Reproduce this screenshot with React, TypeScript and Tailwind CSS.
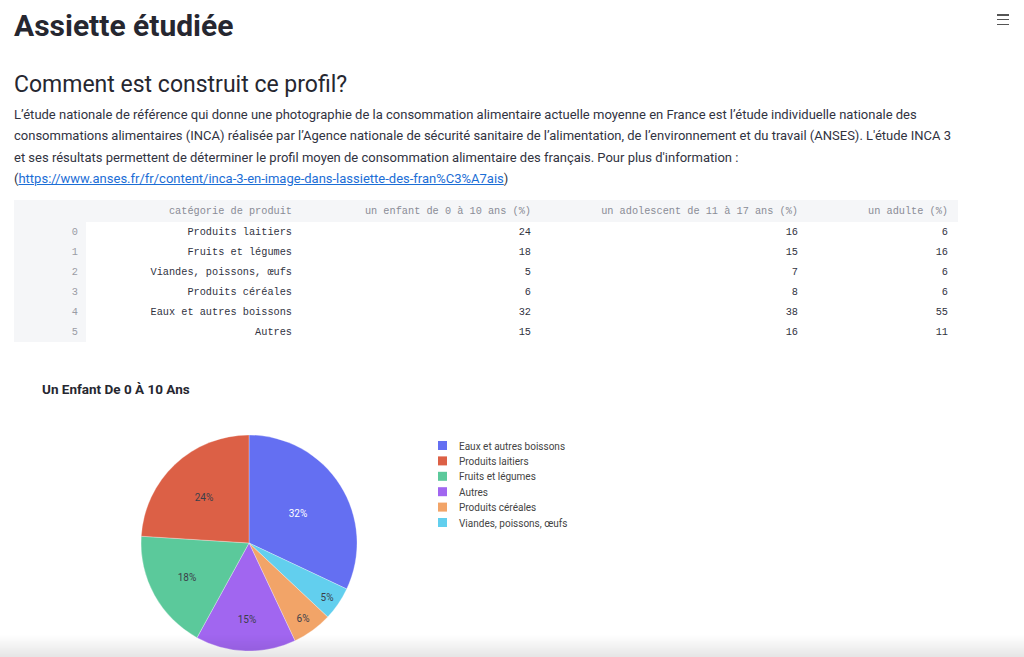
import React from "react";

const rows = [
  { cat: "Produits laitiers", enfant: 24, ado: 16, adulte: 6 },
  { cat: "Fruits et légumes", enfant: 18, ado: 15, adulte: 16 },
  { cat: "Viandes, poissons, œufs", enfant: 5, ado: 7, adulte: 6 },
  { cat: "Produits céréales", enfant: 6, ado: 8, adulte: 6 },
  { cat: "Eaux et autres boissons", enfant: 32, ado: 38, adulte: 55 },
  { cat: "Autres", enfant: 15, ado: 16, adulte: 11 },
];

// slices in plotly order (clockwise from top)
const slices = [
  { label: "Eaux et autres boissons", value: 32, color: "#646ff2", text: "#ffffff", lx: 49, ly: -30 },
  { label: "Viandes, poissons, œufs", value: 5, color: "#62cfee", text: "#3b3f4a", lx: 78, ly: 54 },
  { label: "Produits céréales", value: 6, color: "#f2a468", text: "#3b3f4a", lx: 54, ly: 75 },
  { label: "Autres", value: 15, color: "#a166f0", text: "#3b3f4a", lx: -2, ly: 76 },
  { label: "Fruits et légumes", value: 18, color: "#5bc99b", text: "#3b3f4a", lx: -62, ly: 34 },
  { label: "Produits laitiers", value: 24, color: "#dc6046", text: "#3b3f4a", lx: -45, ly: -46 },
];

const legendOrder = [0, 5, 4, 3, 2, 1];

const R = 108;

function slicePath(cx: number, cy: number, a0: number, a1: number) {
  const p = (a: number) => {
    const rad = (a * Math.PI) / 180;
    return [cx + R * Math.sin(rad), cy - R * Math.cos(rad)];
  };
  const [x0, y0] = p(a0);
  const [x1, y1] = p(a1);
  const large = a1 - a0 > 180 ? 1 : 0;
  return `M ${cx} ${cy} L ${x0} ${y0} A ${R} ${R} 0 ${large} 1 ${x1} ${y1} Z`;
}

function PieChart() {
  const cx = 235;
  const cy = 173;
  let acc = 0;
  return (
    <svg width="944" height="290" className="block">
      <text
        x="28"
        y="24"
        fontSize="13.5"
        fontWeight="700"
        fill="#262730"
        fontFamily="Roboto, 'Liberation Sans', sans-serif"
      >
        Un Enfant De 0 À 10 Ans
      </text>
      {slices.map((s) => {
        const a0 = acc * 3.6;
        acc += s.value;
        const a1 = acc * 3.6;
        return <path key={s.label} d={slicePath(cx, cy, a0, a1)} fill={s.color} stroke="#ffffff" strokeWidth="0.3" />;
      })}
      {slices.map((s) => (
        <text
          key={s.label + "t"}
          x={cx + s.lx}
          y={cy + s.ly + 3.5}
          textAnchor="middle"
          fontSize="10"
          fill={s.text}
          fontFamily="Roboto, 'Liberation Sans', sans-serif"
        >
          {s.value}%
        </text>
      ))}
      {legendOrder.map((i, k) => {
        const s = slices[i];
        const y = 76 + k * 15.4;
        return (
          <g key={s.label + "l"}>
            <rect x="424" y={y - 5} width="9" height="9" fill={s.color} />
            <text
              x="445"
              y={y + 3.5}
              fontSize="10"
              fill="#444444"
              fontFamily="Roboto, 'Liberation Sans', sans-serif"
            >
              {s.label}
            </text>
          </g>
        );
      })}
    </svg>
  );
}

export default function App() {
  return (
    <div className="relative min-h-[657px] bg-white text-[#31333f] font-['Roboto','Liberation_Sans',sans-serif]">
      {/* menu */}
      <button className="absolute right-[15px] top-[14px] flex flex-col gap-[3.4px]">
        <span className="block h-[1.5px] w-[12px] bg-[#555]" />
        <span className="block h-[1.5px] w-[12px] bg-[#555]" />
        <span className="block h-[1.5px] w-[12px] bg-[#555]" />
      </button>

      <div className="px-[14px] pt-[8px]">
        <h1 className="text-[30px] font-bold leading-[36px] text-[#262730]">Assiette étudiée</h1>

        <h2 className="mt-[26px] text-[23px] leading-[30px] text-[#262730]">Comment est construit ce profil?</h2>

        <p className="mt-[4px] w-[944px] text-[13px] leading-[21.3px]">
          L’étude nationale de référence qui donne une photographie de la consommation alimentaire actuelle moyenne en
          France est l’étude individuelle nationale des consommations alimentaires (INCA) réalisée par l’Agence nationale
          de sécurité sanitaire de l’alimentation, de l’environnement et du travail (ANSES). L'étude INCA 3 et ses
          résultats permettent de déterminer le profil moyen de consommation alimentaire des français. Pour plus
          d'information :<br />(
          <a href="#" className="text-[#1c6ed6] underline">
            https://www.anses.fr/fr/content/inca-3-en-image-dans-lassiette-des-fran%C3%A7ais
          </a>
          )
        </p>

        <table className="mt-[11px] w-[944px] border-collapse font-['Liberation_Mono',monospace] text-[10.25px]">
          <thead>
            <tr className="h-[22px] bg-[#f5f6f8] text-[#8a8c96]">
              <th className="w-[72px] font-normal" />
              <th className="w-[216px] pr-[10px] text-right font-normal">catégorie de produit</th>
              <th className="w-[239px] pr-[10px] text-right font-normal">un enfant de 0 à 10 ans (%)</th>
              <th className="w-[267px] pr-[10px] text-right font-normal">un adolescent de 11 à 17 ans (%)</th>
              <th className="pr-[10px] text-right font-normal">un adulte (%)</th>
            </tr>
          </thead>
          <tbody>
            {rows.map((r, i) => (
              <tr key={r.cat} className="h-[20px]">
                <td className="bg-[#f5f6f8] pr-[8px] text-right text-[#9a9ca5]">{i}</td>
                <td className="pr-[10px] text-right">{r.cat}</td>
                <td className="pr-[10px] text-right">{r.enfant}</td>
                <td className="pr-[10px] text-right">{r.ado}</td>
                <td className="pr-[10px] text-right">{r.adulte}</td>
              </tr>
            ))}
          </tbody>
        </table>

        <div className="mt-[28px]">
          <PieChart />
        </div>
      </div>

      {/* screenshot shadow */}
      <div className="pointer-events-none fixed inset-x-0 bottom-0 h-[22px] bg-gradient-to-b from-transparent to-black/10" />
    </div>
  );
}
